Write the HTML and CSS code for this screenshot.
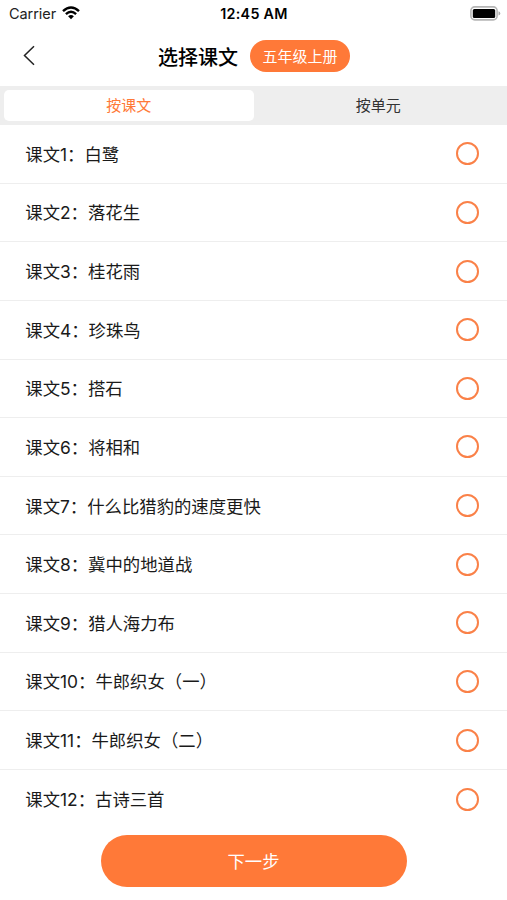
FILE: index.html
```html
<!DOCTYPE html>
<html lang="zh-CN">
<head>
<meta charset="utf-8">
<title>选择课文</title>
<link rel="stylesheet" href="styles.css">
</head>
<body>
<div class="status">
  <div class="carrier"><span>Carrier</span>
    <svg class="wifi" width="18" height="14" viewBox="0 0 18 14" fill="none" stroke="#000" stroke-width="2.4"><path d="M1 5.1Q9-2.3 17 5.1M3.9 8.1Q9 3.4 14.1 8.1"/><path d="M6.1 10.3Q9 7.9 11.9 10.3L9 13.3Z" fill="#000" stroke="none"/></svg>
  </div>
  <div class="time">12:45 AM</div>
  <svg class="battery" width="31" height="15" viewBox="0 0 31 15"><rect x=".9" y=".9" width="26.2" height="13" rx="3.8" fill="#fff" stroke="#b5b5b5" stroke-width="1.6"/><rect x="2.8" y="2.9" width="22.4" height="9" rx="1.5" fill="#000"/><path d="M28.5 5.2Q30.3 5.8 30.3 7.4T28.5 9.6Z" fill="#aaa"/></svg>
</div>
<header class="nav">
  <svg class="back" width="14" height="22" viewBox="0 0 14 22" fill="none" stroke="#222" stroke-width="1.5"><path d="M12 1.300L2.500 10.500l9.500 9.200"/></svg>
  <h1>选择课文</h1>
  <span class="grade">五年级上册</span>
</header>
<div class="tabs"><div class="tab active">按课文</div><div class="tab">按单元</div></div>
<ul class="list">
  <li><span>课文1：白鹭</span><i class="radio"></i></li>
  <li><span>课文2：落花生</span><i class="radio"></i></li>
  <li><span>课文3：桂花雨</span><i class="radio"></i></li>
  <li><span>课文4：珍珠鸟</span><i class="radio"></i></li>
  <li><span>课文5：搭石</span><i class="radio"></i></li>
  <li><span>课文6：将相和</span><i class="radio"></i></li>
  <li><span>课文7：什么比猎豹的速度更快</span><i class="radio"></i></li>
  <li><span>课文8：冀中的地道战</span><i class="radio"></i></li>
  <li><span>课文9：猎人海力布</span><i class="radio"></i></li>
  <li><span>课文10：牛郎织女（一）</span><i class="radio"></i></li>
  <li><span>课文11：牛郎织女（二）</span><i class="radio"></i></li>
  <li><span>课文12：古诗三首</span><i class="radio"></i></li>
</ul>
<footer class="footer"><div class="next">下一步</div></footer>
</body>
</html>
```
FILE: styles.css
```css
* { box-sizing: border-box; }
body {
  margin: 0;
  width: 507px;
  height: 900px;
  overflow: hidden;
  display: flex;
  flex-direction: column;
  background: #fff;
  color: #1a1a1a;
  font-family: Inter, "Noto Sans CJK SC", sans-serif;
}
.status {
  height: 28px;
  display: grid;
  grid-template-columns: 1fr auto 1fr;
  align-items: center;
  padding: 0 6px 0 9px;
  color: #000;
  font-size: 14.5px;
}
.carrier { display: flex; align-items: center; gap: 6px; color: #222; letter-spacing: -.06px; padding-bottom: 1px; }
.wifi { margin-top: -1px; }
.time { font-weight: 600; font-size: 14.3px; letter-spacing: .28px; padding-bottom: 1px; margin-left: -2px; }
.battery { justify-self: end; margin-top: -2px; }
.nav {
  height: 58px;
  display: flex;
  align-items: center;
  padding: 0 0 2px 22px;
}
.back { flex: none; }
h1 {
  margin: 0 12px 0 122px;
  font-size: 20px;
  line-height: 30px;
  padding-top: 3px;
  font-weight: 500;
  color: #000;
  white-space: nowrap;
}
.grade {
  width: 100px;
  height: 32px;
  border-radius: 16px;
  background: #ff7938;
  color: #fff;
  font-size: 15px;
  line-height: 33px;
  text-align: center;
}
.tabs {
  height: 39px;
  display: flex;
  padding: 4px;
  background: #eee;
}
.tab {
  flex: 1;
  border-radius: 5px;
  font-size: 15px;
  line-height: 32px;
  text-align: center;
  color: #333;
}
.active { background: #fff; color: #ff7938; }
.list { list-style: none; margin: 0; padding: 0; }
.list li {
  height: 58.640px;
  display: flex;
  align-items: center;
  justify-content: space-between;
  padding: 0 28px 0 25.300px;
  border-bottom: 1px solid #eee;
  font-size: 17.360px;
  line-height: 26px;
}
.list li > span { padding-top: 2px; }
.list li:last-child { border-bottom: 0; }
.radio {
  width: 23px;
  height: 23px;
  border: 2px solid #fa8148;
  border-radius: 50%;
}
.footer { display: flex; justify-content: center; padding-top: 6px; }
.next {
  width: 306px;
  height: 52px;
  border-radius: 26px;
  background: #ff7938;
  color: #fff;
  font-size: 17.300px;
  line-height: 53px;
  text-align: center;
}
```
